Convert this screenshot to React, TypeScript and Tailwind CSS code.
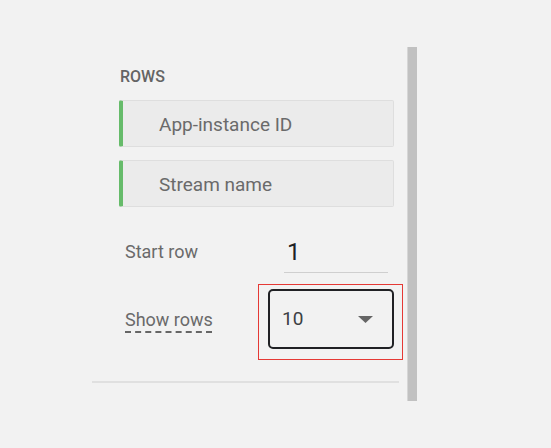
const chips = ["App-instance ID", "Stream name"];

export default function App() {
  return (
    <div className="min-h-[448px] w-[551px] bg-[#f2f2f2] font-['Roboto',sans-serif]">
      <div className="flex pl-[92px] pt-[47px]">
        <div className="w-[315px]">
          <div className="pl-[28px] pt-[21px] text-[16px] font-medium leading-[18px] text-[#646464]">
            ROWS
          </div>

          <div className="mt-[14px] flex flex-col gap-[13px]">
            {chips.map((chip) => (
              <div
                key={chip}
                className="ml-[27px] flex h-[47px] w-[275px] items-center rounded-[2px] border border-l-4 border-[#dedede] border-l-[#66bb6a] bg-[#ebebeb] pl-[36px] pt-[3px] text-[19px] text-[#6a6a6a]"
              >
                {chip}
              </div>
            ))}
          </div>

          <div className="mt-[25px] flex h-[41px] items-center">
            <div className="w-[192px] pb-[3px] pl-[33px] text-[18px] text-[#6a6a6a]">Start row</div>
            <div className="flex h-full w-[104px] items-center border-b border-[#cfcfcf] pl-[3px] text-[24px] text-[#202124]">
              1
            </div>
          </div>

          <div className="relative mt-[16px] flex h-[60px] items-center">
            <div className="w-[176px] pl-[33px] text-[18px] text-[#6a6a6a]">
              <span className="underline decoration-[#666] decoration-dashed underline-offset-[6px]">
                Show rows
              </span>
            </div>
            <div className="flex h-[60px] w-[126px] items-center justify-between rounded-[5px] border-2 border-[#202124] pl-[12px] pr-[19px] text-[19px] text-[#3c4043]">
              <span>10</span>
              <svg width="15" height="7" viewBox="0 0 15 7">
                <path d="M0 0h15L7.5 7z" fill="#666" />
              </svg>
            </div>
            <div className="absolute left-[166px] top-[-5px] h-[76px] w-[145px] border border-[#e53935]" />
          </div>

          <div className="mt-[32px] h-[2px] w-[307px] bg-[#e0e0e0]" />
        </div>

        <div className="h-[354px] w-[10px] border-l border-[#d6d6d6] bg-[#c1c1c1]" />
      </div>
    </div>
  );
}
